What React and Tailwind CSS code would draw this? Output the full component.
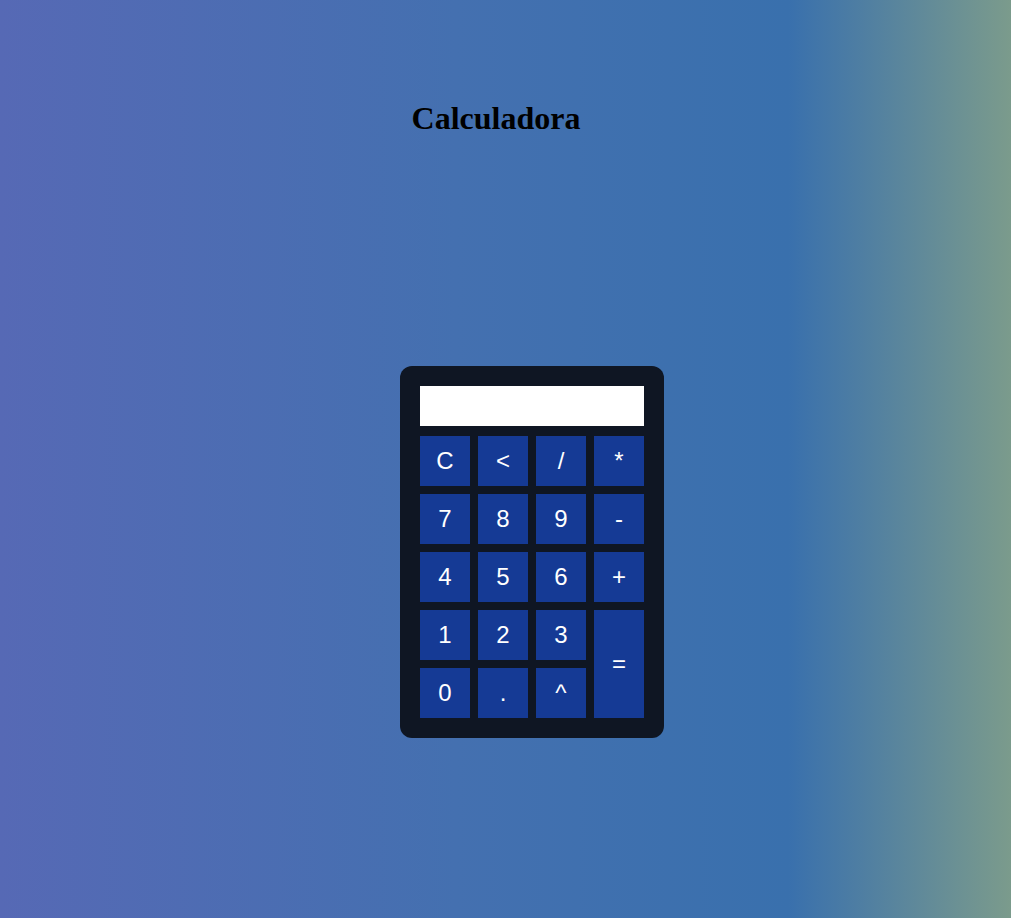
const KEYS = [
    { k: 'C' }, { k: '<' }, { k: '/' }, { k: '*' },
    { k: '7' }, { k: '8' }, { k: '9' }, { k: '-' },
    { k: '4' }, { k: '5' }, { k: '6' }, { k: '+' },
    { k: '1' }, { k: '2' }, { k: '3' }, { k: '=', tall: true },
    { k: '0' }, { k: '.' }, { k: '^' },
];

export default function App() {
    return (
        <div className="min-h-[918px] w-full bg-[linear-gradient(to_right,#5669b5_0%,#4470b0_45%,#3970ad_78%,#7b9b8c_100%)]">
            <div className="flex justify-center pr-[19px] pt-[101px]">
                <h1 className="text-[32px] leading-[35px] font-bold text-black" style={{ fontFamily: '"Liberation Serif", "Times New Roman", serif' }}>
                    Calculadora
                </h1>
            </div>

            <div className="ml-[400px] mt-[230px] w-[264px] rounded-[12px] bg-[#0f1623] p-5">
                <div className="h-10 w-full bg-white" />
                <div className="mt-[10px] grid grid-cols-[repeat(4,50px)] auto-rows-[50px] gap-2">
                    {KEYS.map(b => (
                        <button key={b.k}
                            className={`flex items-center justify-center bg-[#153a95] text-[24px] text-white ${b.tall ? 'row-span-2' : ''}`}
                            style={{ fontFamily: '"Liberation Sans", Arial, sans-serif' }}>
                            {b.k}
                        </button>
                    ))}
                </div>
            </div>
        </div>
    );
}
